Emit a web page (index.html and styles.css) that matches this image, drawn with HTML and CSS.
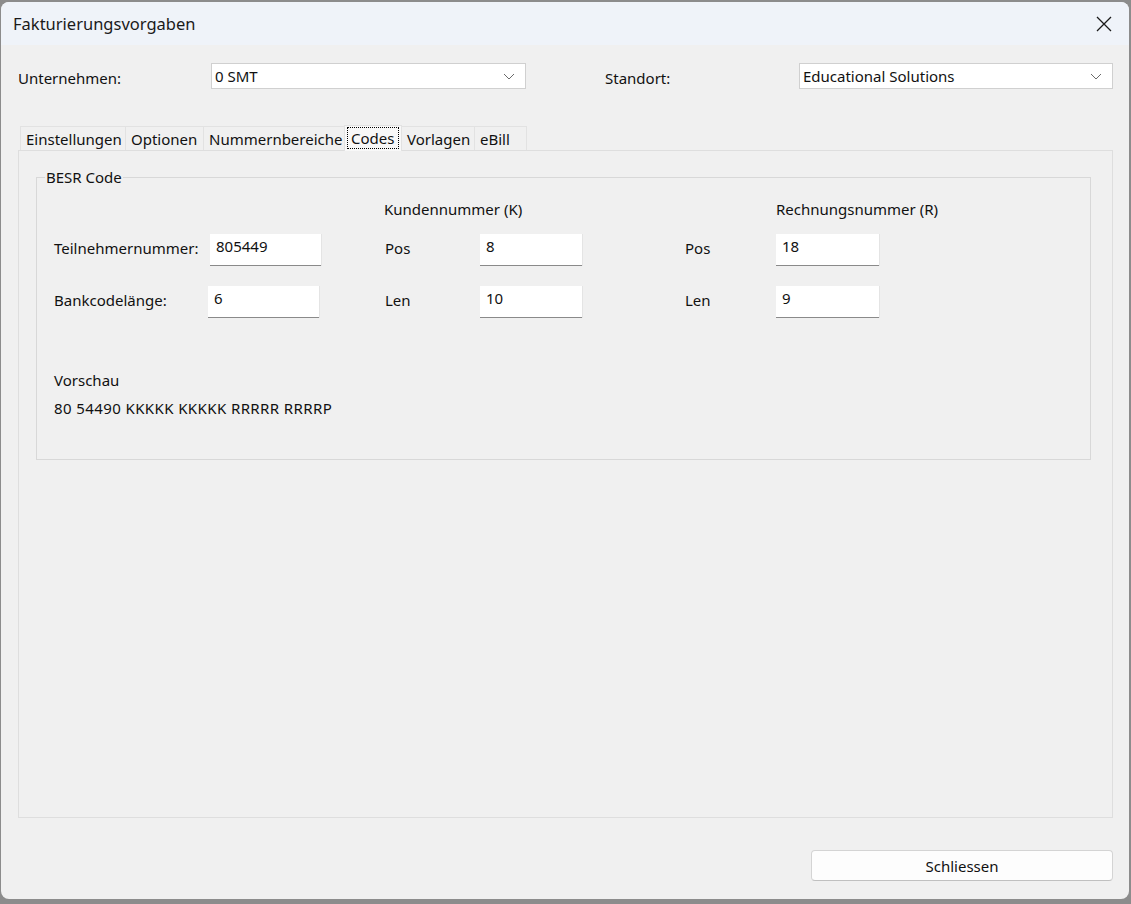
FILE: index.html
```html
<!DOCTYPE html>
<html lang="de">
<head>
<meta charset="utf-8">
<title>Fakturierungsvorgaben</title>
<link rel="stylesheet" href="styles.css">
</head>
<body>
<div class="window">
  <div class="titlebar">
    <span class="title">Fakturierungsvorgaben</span>
    <span class="close">
      <svg width="16" height="16" viewBox="0 0 16 16"><path d="M1 1 L15 15 M15 1 L1 15" stroke="#1a1a1a" stroke-width="1.3" fill="none"/></svg>
    </span>
  </div>
  <div class="content">
    <div class="toprow">
      <span class="lbl lbl-unt">Unternehmen:</span>
      <div class="combo"><span>0 SMT</span><svg class="chev" width="12" height="7" viewBox="0 0 12 7"><path d="M1 1 L6 6 L11 1" stroke="#6a6a6a" stroke-width="1" fill="none"/></svg></div>
      <span class="lbl lbl-std">Standort:</span>
      <div class="combo"><span>Educational Solutions</span><svg class="chev" width="12" height="7" viewBox="0 0 12 7"><path d="M1 1 L6 6 L11 1" stroke="#6a6a6a" stroke-width="1" fill="none"/></svg></div>
    </div>
    <div class="tabs">
      <span class="tab t-ein">Einstellungen</span>
      <span class="tab t-opt">Optionen</span>
      <span class="tab t-num">Nummernbereiche</span>
      <span class="tab t-cod active"><span class="focus">Codes</span></span>
      <span class="tab t-vor">Vorlagen</span>
      <span class="tab t-ebi">eBill</span>
    </div>
    <div class="panel">
      <fieldset class="group">
        <legend>BESR Code</legend>
        <div class="grid">
          <span class="r1 c4 hdr">Kundennummer (K)</span>
          <span class="r1 c8 hdr">Rechnungsnummer (R)</span>

          <span class="r2 c1 flbl">Teilnehmernummer:</span>
          <span class="r2 c2 input in-a">805449</span>
          <span class="r2 c4 flbl">Pos</span>
          <span class="r2 c5 input">8</span>
          <span class="r2 c7 flbl">Pos</span>
          <span class="r2 c8 input">18</span>

          <span class="r3 c1 flbl">Bankcodelänge:</span>
          <span class="r3 c2 input in-b">6</span>
          <span class="r3 c4 flbl">Len</span>
          <span class="r3 c5 input">10</span>
          <span class="r3 c7 flbl">Len</span>
          <span class="r3 c8 input">9</span>
        </div>
        <div class="preview">
          <div class="pv-lbl">Vorschau</div>
          <div class="pv-val">80 54490 KKKKK KKKKK RRRRR RRRRP</div>
        </div>
      </fieldset>
    </div>
    <div class="footer">
      <button class="btn">Schliessen</button>
    </div>
  </div>
</div>
</body>
</html>
```
FILE: styles.css
```css
* { box-sizing: border-box; }
html, body { margin: 0; padding: 0; }
body {
  width: 1131px;
  height: 904px;
  background: #8c8c8c;
  font-family: "Noto Sans", "Liberation Sans", sans-serif;
  font-size: 15px;
  color: #111;
  overflow: hidden;
}
.window {
  margin: 2px 2px 0 1px;
  width: 1128px;
  height: 897px;
  background: #f0f0f0;
  border-radius: 8px;
  overflow: hidden;
  display: flex;
  flex-direction: column;
}
.titlebar {
  height: 43px;
  flex: none;
  background: #eff3f9;
  display: flex;
  align-items: center;
  justify-content: space-between;
  padding: 0 17px 0 12px;
}
.title { font-size: 16.5px; color: #1a1a1a; }
.close { display: flex; }
.content {
  flex: 1;
  display: flex;
  flex-direction: column;
  padding: 18px 16px 18px 17px;
}
.toprow {
  display: grid;
  grid-template-columns: 193px 315px 79px 194px 314px;
  align-items: center;
  height: 26px;
}
.lbl { padding-top: 4px; }
.lbl-std { grid-column: 4; }
.combo {
  height: 26px;
  background: #fff;
  border: 1px solid #d0d0d0;
  display: flex;
  align-items: center;
  justify-content: space-between;
  padding: 0 10px 0 3px;
}
.tabs {
  margin-top: 37px;
  display: flex;
  align-items: flex-end;
  height: 24px;
  padding-left: 3px;
}
.tab {
  height: 24px;
  padding: 0 0 0 5px;
  border: 1px solid #e2e2e2;
  border-bottom: none;
  margin-left: -1px;
  display: flex;
  align-items: center;
  background: #f0f0f0;
  white-space: nowrap;
  overflow: hidden;
}
.t-ein { width: 106px; }
.t-opt { width: 79px; }
.t-num { width: 142px; }
.t-cod { width: 58px; }
.t-vor { width: 74px; }
.t-ebi { width: 53px; }
.tab.active {
  height: 26px;
  margin-bottom: -1px;
  background: #f8f8f8;
  padding: 1px 0 0 2px;
  position: relative;
  z-index: 1;
  align-items: flex-start;
}
.focus {
  border: 1px dotted #000;
  padding: 0 2px 0 3px;
  line-height: 20px;
  width: 52px;
}
.panel {
  height: 668px;
  border: 1px solid #dedede;
  background: #f0f0f0;
  padding: 16px 21px 0 17px;
}
.group {
  margin: 0;
  height: 293px;
  border: 1px solid #d8d8d8;
  padding: 0 17px 0 17px;
}
.group legend {
  padding: 0 1px;
  margin-left: -9px;
}
.grid {
  display: grid;
  grid-template-columns: 155px 111px 65px 95px 102px 103px 91px 103px;
  grid-template-rows: 20px 32px 32px;
  row-gap: 20px;
  margin-top: 7px;
  align-items: center;
}
.r1 { grid-row: 1; }
.r2 { grid-row: 2; }
.r3 { grid-row: 3; }
.c1 { grid-column: 1; }
.c2 { grid-column: 2; }
.c4 { grid-column: 4; }
.c5 { grid-column: 5; }
.c7 { grid-column: 7; }
.c8 { grid-column: 8; }
.hdr.c4 { grid-column: 4 / span 3; margin-left: -1px; }
.hdr.c8 { grid-column: 8 / span 2; }
.hdr { white-space: nowrap; margin-top: 10px; }
.flbl { padding-bottom: 4px; }
.input {
  height: 32px;
  background: #fff;
  border-bottom: 1px solid #8a8a8a;
  box-shadow: 1px 0 0 #e4e4e4;
  padding: 1px 6px 0 6px;
  line-height: 22px;
}
.in-a { margin-left: 1px; margin-right: -1px; }
.in-b { margin-left: -1px; margin-right: 1px; }
.preview { margin-top: 52px; }
.pv-val { margin-top: 8px; letter-spacing: 0.4px; }
.footer {
  margin-top: auto;
  display: flex;
  justify-content: flex-end;
}
.btn {
  width: 302px;
  height: 31px;
  background: #fdfdfd;
  border: 1px solid #d4d4d4;
  border-bottom-color: #c0c0c0;
  border-radius: 4px;
  font-family: inherit;
  font-size: 15px;
  color: #111;
}
```
